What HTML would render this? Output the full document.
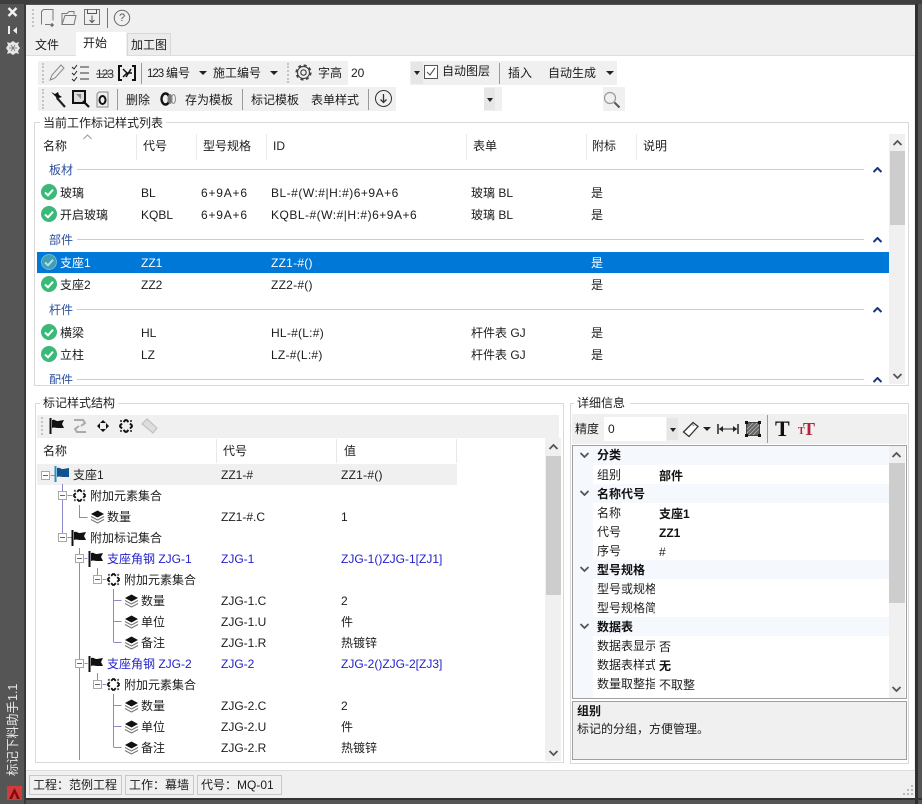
<!DOCTYPE html>
<html lang="zh"><head><meta charset="utf-8"><title>标记下料助手</title>
<style>
html,body{margin:0;padding:0;width:922px;height:804px;overflow:hidden;background:#555}
body{position:relative;font:12px/16px "Liberation Sans","Noto Sans CJK SC",sans-serif;color:#1c1c1c}
div,span,svg{position:absolute}
.t{white-space:nowrap;height:16px}
.b{font-weight:bold;color:#111}
.bl{color:#2222cc}
.g{color:#2b4f9e}
.w{color:#fff}
.ln{height:1px;background:#c4cfdc}
.box{border:1px solid #d9d9d9;box-sizing:border-box}
.gray{background:#f0f0f0}
.sep{width:1px;background:#9a9a9a}
.grip{width:2px;border-left:2px dotted #c4c4c4}
.st{border:1px solid #c8c8c8;background:#f0f0f0;box-sizing:border-box;height:20px;top:775px;line-height:18px;padding-left:3px;white-space:nowrap}
.cat{background:#f5f8fd;left:574px;width:315px;height:19px}
.dd{width:0;height:0;border-left:4px solid transparent;border-right:4px solid transparent;border-top:4px solid #222}
.hs{width:1px;height:26px;top:134px;background:#eaeaea}
.a{letter-spacing:.5px}
.c{letter-spacing:.8px}
.e{letter-spacing:.25px}
</style></head><body>
<svg width="0" height="0" style="left:0;top:0"><defs>
<symbol id="ok" viewBox="0 0 16 16"><circle cx="8" cy="8" r="8" fill="#3cb878"/><path d="M4 8.500l3 2.800 5-5.600" fill="none" stroke="#fff" stroke-width="2"/></symbol>
<symbol id="okd" viewBox="0 0 16 16"><circle cx="8" cy="8" r="7.500" fill="#3f9fb6" stroke="#74b8c8"/><path d="M4 8.500l3 2.800 5-5.600" fill="none" stroke="#b8dbe4" stroke-width="2"/></symbol>
<symbol id="flag" viewBox="0 0 16 16"><path d="M1.500 0v16" stroke="#111" stroke-width="2"/><path d="M3 2c3-1 3 1 6 1l6-1-2 4 2 4-6 0c-3 0-3-1-6 0z" fill="#111"/></symbol>
<symbol id="flagb" viewBox="0 0 16 16"><path d="M1.500 0v16" stroke="#2d8fc0" stroke-width="2"/><path d="M3 2c3-1 3 1 6 1l6-1v9l-6 0c-3 0-3-1-6 0z" fill="#12528f"/></symbol>
<symbol id="ring" viewBox="0 0 14 14"><path d="M7 .5L9.500 3M7 .5L4.500 3M13.500 7L11 4.500M13.500 7L11 9.500M7 13.500L9.500 11M7 13.500L4.500 11M.5 7L3 4.500M.5 7L3 9.500" stroke="#111" stroke-width="2" fill="none"/><path d="M1 1h2v2H1zM11 1h2v2h-2zM1 11h2v2H1zM11 11h2v2h-2z" fill="#555"/></symbol>
<symbol id="lay" viewBox="0 0 15 14"><path d="M7.500 .5L14 4 7.500 7.500 1 4z" fill="#111"/><path d="M1 6.500l6.500 3.500 6.500-3.500M1 9.500l6.500 3.500 6.500-3.500" fill="none" stroke="#777" stroke-width="1.100"/></symbol>
<symbol id="ex" viewBox="0 0 9 9"><rect x=".5" y=".5" width="8" height="8" fill="#fff" stroke="#a8a8a8"/><path d="M2 4.500h5" stroke="#666"/></symbol>
<symbol id="up" viewBox="0 0 9 6"><path d="M.5 5L4.500 1l4 4" fill="none" stroke="#17357f" stroke-width="2"/></symbol>
<symbol id="sup" viewBox="0 0 9 6"><path d="M.5 5L4.500 1l4 4" fill="none" stroke="#555" stroke-width="1.800"/></symbol>
<symbol id="sdn" viewBox="0 0 9 6"><path d="M.5 1L4.500 5l4-4" fill="none" stroke="#555" stroke-width="1.800"/></symbol>
</defs></svg>

<!-- window -->
<div style="left:0;top:0;width:922px;height:4px;background:#3e3e3e"></div>
<div style="left:24px;top:4px;width:2px;height:800px;background:#3a3a3a"></div>
<div style="left:26px;top:5px;width:889px;height:793px;background:#f0f0f0"></div>
<div style="left:915px;top:4px;width:3px;height:800px;background:#2f2f2f"></div>
<div style="left:26px;top:798px;width:896px;height:2px;background:#333"></div>

<!-- side bar -->
<svg style="left:6px;top:4px" width="14" height="52" viewBox="0 0 14 52">
<path d="M2.500 4l8 8M10.500 4l-8 8" stroke="#f2f2f2" stroke-width="2.400"/>
<path d="M3 22v8" stroke="#eee" stroke-width="2"/><path d="M11 23v7l-4-3.500z" fill="#eee"/>
<path d="M1 38l3 1 3-2 3 2 3-1-1 3 2 3-2 3 1 3-3-1-3 2-3-2-3 1 1-3-2-3 2-3z" fill="#e6e6e6"/><path d="M5 41l4 6M9 41l-4 6M3 44h8" stroke="#777" stroke-width=".8"/>
</svg>
<div class="t" style="left:5px;top:776px;width:90px;color:#e8e8e8;font-size:12.500px;transform:rotate(-90deg);transform-origin:0 0">标记下料助手1.1</div>
<svg style="left:7px;top:786px" width="15" height="14" viewBox="0 0 15 14"><rect width="15" height="14" fill="#d33a3a"/><path d="M7.500 2L2 13h3l2.500-6 2.500 6h3z" fill="#7d0c0c"/></svg>

<!-- quick access -->
<div class="grip" style="left:32px;top:9px;height:18px"></div>
<svg style="left:40px;top:8px" width="100" height="20" viewBox="0 0 100 20" fill="none" stroke="#777">
<path d="M1.500 16.500V3.500l2-2h9.500v11M10 16.500H5" /><path d="M12 15v4M10 17h4" stroke="#444"/>
<path d="M22 16.500V5.500h5l2-2h5v3M22 16.500h12l2-9H25z"/>
<rect x="44.500" y="1.500" width="15" height="15"/><path d="M47.500 1.500v4h9v-4M52 7.500v7M49.500 12l2.500 2.500 2.500-2.500" stroke="#555"/>
</svg>
<div class="sep" style="left:107px;top:8px;height:20px;background:#777"></div>
<svg style="left:113px;top:9px" width="18" height="18" viewBox="0 0 18 18"><circle cx="9" cy="9" r="7.700" fill="none" stroke="#666"/></svg>
<div class="t" style="left:119px;top:10px;color:#555;font-size:11px">?</div>

<!-- tabs -->
<div class="t" style="left:35px;top:37px">文件</div>
<div style="left:76px;top:32px;width:50px;height:24px;background:#fff"></div>
<div class="t" style="left:83px;top:35px">开始</div>
<div style="left:127px;top:33px;width:44px;height:22px;background:#ececec;border:1px solid #d8d8d8;border-bottom:0;box-sizing:border-box"></div>
<div class="t" style="left:131px;top:37px">加工图</div>
<div style="left:26px;top:55px;width:50px;height:1px;background:#ddd"></div>
<div style="left:126px;top:55px;width:789px;height:1px;background:#ddd"></div>
<div style="left:26px;top:56px;width:888px;height:714px;background:#fff"></div>
<div style="left:26px;top:770px;width:889px;height:1px;background:#ddd"></div>

<!-- ribbon row1 -->
<div class="gray" style="left:38px;top:61px;width:579px;height:24px"></div>
<div class="grip" style="left:42px;top:63px;height:20px"></div>
<svg style="left:48px;top:63px" width="90" height="20" viewBox="0 0 90 20" fill="none">
<path d="M2 17l2-5L13 2l3 3-9 10z M2 17l3-1" stroke="#888" fill="#eee"/>
<path d="M24 4l2 2 3-4M24 10l2 2 3-4M24 16l2 2 3-4" stroke="#222"/><path d="M32 4h9M32 10h9M32 16h9" stroke="#333"/>
<text x="48" y="15" font-size="12" font-family="Liberation Sans" fill="#333" stroke="none" letter-spacing="-1">123</text><path d="M48 11h17" stroke="#444"/>
<path d="M74 3h-3v14h3M84 3h3v14h-3" stroke="#111" stroke-width="2"/><path d="M75 6l4 4-4 4M83 6l-5 8M78 10h6" stroke="#111" stroke-width="1.500"/>
</svg>
<div class="sep" style="left:141px;top:63px;height:21px"></div>
<div class="t" style="left:147px;top:66px;letter-spacing:-1px;font-size:11.500px">123</div>
<div class="t" style="left:166px;top:65px">编号</div>
<div class="dd" style="left:199px;top:71px"></div>
<div class="t" style="left:213px;top:65px">施工编号</div>
<div class="dd" style="left:270px;top:71px"></div>
<div class="grip" style="left:287px;top:63px;height:20px"></div>
<svg style="left:295px;top:64px" width="17" height="17" viewBox="0 0 17 17" fill="none" stroke="#444"><circle cx="8.500" cy="8.500" r="2.700" stroke-width="1.200"/><circle cx="8.500" cy="8.500" r="6" stroke-width="1.200"/><circle cx="8.500" cy="8.500" r="7.200" stroke-width="1.800" stroke-dasharray="3 2.650"/></svg>
<div class="t" style="left:318px;top:65px">字高</div>
<div style="left:348px;top:61px;width:62px;height:24px;background:#fff"></div>
<div class="t" style="left:351px;top:65px">20</div>
<div style="left:411px;top:62px;width:12px;height:22px;background:#e6e6e6"></div>
<div class="dd" style="left:414px;top:71px;border-left-width:3px;border-right-width:3px"></div>
<svg style="left:424px;top:65px" width="14" height="14" viewBox="0 0 14 14"><rect x=".5" y=".5" width="13" height="13" fill="#fff" stroke="#555"/><path d="M3 7l3 3 5-7" fill="none" stroke="#555" stroke-width="1.100"/></svg>
<div class="t" style="left:442px;top:63px">自动图层</div>
<div class="sep" style="left:499px;top:63px;height:21px"></div>
<div class="t" style="left:508px;top:65px">插入</div>
<div class="t" style="left:548px;top:65px">自动生成</div>
<div class="dd" style="left:606px;top:71px"></div>

<!-- ribbon row2 -->
<div class="gray" style="left:38px;top:87px;width:587px;height:24px"></div>
<div class="grip" style="left:42px;top:89px;height:20px"></div>
<svg style="left:48px;top:89px" width="64" height="20" viewBox="0 0 64 20" fill="none">
<path d="M3 3l4 2 3-2 1 3 3 2-3 1-2 2-1-3z" fill="#111"/><path d="M9 9l8 9" stroke="#222" stroke-width="2.200"/>
<rect x="25" y="2" width="12" height="12" stroke="#111" stroke-width="2" fill="#ddd"/><path d="M28 5h5v5z" fill="#888"/><path d="M35 12l6 6" stroke="#111" stroke-width="2.200"/>
<path d="M51 3h9v15H49V5z" stroke="#888" fill="#eee"/><ellipse cx="54.500" cy="11" rx="3" ry="4" stroke="#111" stroke-width="2"/>
</svg>
<div class="sep" style="left:117px;top:89px;height:21px"></div>
<div class="t" style="left:126px;top:92px">删除</div>
<svg style="left:160px;top:92px" width="17" height="14" viewBox="0 0 17 14"><ellipse cx="5.500" cy="7" rx="4" ry="5.500" fill="none" stroke="#111" stroke-width="2.400"/><ellipse cx="10" cy="7" rx="2.500" ry="5" fill="#777"/><ellipse cx="13.500" cy="7" rx="2" ry="4.500" fill="none" stroke="#888"/></svg>
<div class="t" style="left:185px;top:92px">存为模板</div>
<div class="sep" style="left:242px;top:89px;height:21px"></div>
<div class="t" style="left:251px;top:92px">标记模板</div>
<div class="t" style="left:311px;top:92px">表单样式</div>
<div class="sep" style="left:368px;top:89px;height:21px"></div>
<svg style="left:374px;top:89px" width="19" height="19" viewBox="0 0 19 19" fill="none" stroke="#333"><circle cx="9.500" cy="9.500" r="8"/><path d="M9.500 5v8M6.500 10.500l3 3 3-3" stroke-width="1.300"/></svg>
<div style="left:396px;top:87px;width:88px;height:24px;background:#fff"></div>
<div style="left:484px;top:88px;width:11px;height:22px;background:#e6e6e6"></div>
<div class="dd" style="left:487px;top:98px;border-left-width:3px;border-right-width:3px"></div>
<div style="left:502px;top:87px;width:101px;height:24px;background:#fff"></div>
<svg style="left:603px;top:91px" width="18" height="18" viewBox="0 0 18 18" fill="none"><circle cx="7" cy="7" r="5.500" stroke="#999" stroke-width="1.200"/><path d="M11.500 11.500l5 5" stroke="#555" stroke-width="2"/></svg>

<!-- list group -->
<div class="box" style="left:34px;top:122px;width:875px;height:264px"></div>
<div style="left:40px;top:118px;width:126px;height:10px;background:#fff"></div>
<div class="t" style="left:43px;top:115px">当前工作标记样式列表</div>
<svg style="left:83px;top:134px" width="9" height="6" viewBox="0 0 9 6"><path d="M.5 5L4.500 1l4 4" fill="none" stroke="#999"/></svg>
<div class="hs" style="left:136px"></div><div class="hs" style="left:196px"></div><div class="hs" style="left:266px"></div><div class="hs" style="left:466px"></div><div class="hs" style="left:586px"></div><div class="hs" style="left:636px"></div>
<div class="t" style="left:43px;top:138px">名称</div><div class="t" style="left:143px;top:138px">代号</div><div class="t" style="left:203px;top:138px">型号规格</div><div class="t" style="left:273px;top:138px">ID</div><div class="t" style="left:473px;top:138px">表单</div><div class="t" style="left:592px;top:138px">附标</div><div class="t" style="left:643px;top:138px">说明</div>

<div class="t g" style="left:49px;top:162px">板材</div><div class="ln" style="left:77px;top:169px;width:787px"></div>
<svg style="left:873px;top:167px" width="9" height="6"><use href="#up"/></svg>
<svg style="left:41px;top:184px" width="16" height="16"><use href="#ok"/></svg>
<div class="t" style="left:60px;top:185px">玻璃</div><div class="t" style="left:141px;top:185px">BL</div><div class="t c" style="left:201px;top:185px">6+9A+6</div><div class="t a" style="left:271px;top:185px">BL-#(W:#|H:#)6+9A+6</div><div class="t" style="left:471px;top:185px">玻璃 BL</div><div class="t" style="left:591px;top:185px">是</div>
<svg style="left:41px;top:206px" width="16" height="16"><use href="#ok"/></svg>
<div class="t" style="left:60px;top:207px">开启玻璃</div><div class="t" style="left:141px;top:207px">KQBL</div><div class="t c" style="left:201px;top:207px">6+9A+6</div><div class="t a" style="left:271px;top:207px">KQBL-#(W:#|H:#)6+9A+6</div><div class="t" style="left:471px;top:207px">玻璃 BL</div><div class="t" style="left:591px;top:207px">是</div>

<div class="t g" style="left:49px;top:232px">部件</div><div class="ln" style="left:77px;top:239px;width:787px"></div>
<svg style="left:873px;top:237px" width="9" height="6"><use href="#up"/></svg>
<div style="left:37px;top:252px;width:852px;height:21px;background:#0078d7"></div>
<svg style="left:41px;top:254px" width="16" height="16"><use href="#okd"/></svg>
<div class="t w" style="left:60px;top:255px">支座1</div><div class="t w" style="left:141px;top:255px">ZZ1</div><div class="t w e" style="left:271px;top:255px">ZZ1-#()</div><div class="t w" style="left:591px;top:255px">是</div>
<svg style="left:41px;top:276px" width="16" height="16"><use href="#ok"/></svg>
<div class="t" style="left:60px;top:277px">支座2</div><div class="t" style="left:141px;top:277px">ZZ2</div><div class="t e" style="left:271px;top:277px">ZZ2-#()</div><div class="t" style="left:591px;top:277px">是</div>

<div class="t g" style="left:49px;top:302px">杆件</div><div class="ln" style="left:77px;top:309px;width:787px"></div>
<svg style="left:873px;top:307px" width="9" height="6"><use href="#up"/></svg>
<svg style="left:41px;top:324px" width="16" height="16"><use href="#ok"/></svg>
<div class="t" style="left:60px;top:325px">横梁</div><div class="t" style="left:141px;top:325px">HL</div><div class="t e" style="left:271px;top:325px">HL-#(L:#)</div><div class="t" style="left:471px;top:325px">杆件表 GJ</div><div class="t" style="left:591px;top:325px">是</div>
<svg style="left:41px;top:346px" width="16" height="16"><use href="#ok"/></svg>
<div class="t" style="left:60px;top:347px">立柱</div><div class="t" style="left:141px;top:347px">LZ</div><div class="t e" style="left:271px;top:347px">LZ-#(L:#)</div><div class="t" style="left:471px;top:347px">杆件表 GJ</div><div class="t" style="left:591px;top:347px">是</div>

<div style="left:49px;top:372px;width:30px;height:12px;overflow:hidden"><div class="t g" style="left:0;top:0">配件</div></div>
<div class="ln" style="left:77px;top:379px;width:787px"></div>
<svg style="left:873px;top:377px" width="9" height="6"><use href="#up"/></svg>

<div style="left:889px;top:134px;width:16px;height:250px;background:#f0f0f0"></div>
<div style="left:890px;top:151px;width:15px;height:74px;background:#cdcdcd"></div>
<svg style="left:893px;top:140px" width="9" height="6"><use href="#sup"/></svg>
<svg style="left:893px;top:373px" width="9" height="6"><use href="#sdn"/></svg>

<!-- structure group -->
<div class="box" style="left:35px;top:403px;width:529px;height:360px"></div>
<div style="left:40px;top:398px;width:78px;height:10px;background:#fff"></div>
<div class="t" style="left:43px;top:395px">标记样式结构</div>
<div class="gray" style="left:37px;top:415px;width:522px;height:23px"></div>
<div class="grip" style="left:41px;top:417px;height:18px"></div>
<svg style="left:49px;top:418px" width="16" height="16"><use href="#flag"/></svg>
<svg style="left:72px;top:418px" width="16" height="16" viewBox="0 0 16 16" fill="none" stroke="#aaa" stroke-width="2"><path d="M2 2h9l2 3-4 3M14 14H5L3 11l4-3"/></svg>
<svg style="left:96px;top:419px" width="14" height="14" viewBox="0 0 14 14"><path d="M7 1l3 3H4zM7 13l3-3H4zM1 7l3-3v6zM13 7l-3-3v6z" fill="#111"/></svg>
<svg style="left:119px;top:419px" width="14" height="14"><use href="#ring"/></svg>
<svg style="left:141px;top:418px" width="17" height="16" viewBox="0 0 17 16"><path d="M1 6l5-5 10 9-4 5z" fill="#ddd" stroke="#bbb"/></svg>
<div class="t" style="left:43px;top:443px">名称</div><div class="t" style="left:223px;top:443px">代号</div><div class="t" style="left:344px;top:443px">值</div>
<div style="left:216px;top:439px;width:1px;height:24px;background:#e8e8e8"></div>
<div style="left:336px;top:439px;width:1px;height:24px;background:#e8e8e8"></div>
<div style="left:456px;top:439px;width:1px;height:24px;background:#e8e8e8"></div>
<div class="gray" style="left:37px;top:464px;width:420px;height:21px"></div>

<svg style="left:37px;top:464px" width="110" height="300" viewBox="37 464 110 300" fill="none" stroke="#8a8ac8">
<path d="M50.500 475.500h5M62.500 484v53M67.500 495.500h5M79.500 505v12.500h8M67.500 537.500h5M79.500 548v212M84.500 558.500h3M97.500 568v11M102.500 579.500h4"/>
<path d="M113.500 589v53M113.500 600.500h8M113.500 621.500h8M113.500 642.500h8M84.500 663.500h3M97.500 673v11M102.500 684.500h4M113.500 694v53M113.500 705.500h8M113.500 726.500h8M113.500 747.500h8"/>
</svg>
<svg style="left:41px;top:471px" width="9" height="9"><use href="#ex"/></svg>
<svg style="left:58px;top:491px" width="9" height="9"><use href="#ex"/></svg>
<svg style="left:58px;top:533px" width="9" height="9"><use href="#ex"/></svg>
<svg style="left:75px;top:554px" width="9" height="9"><use href="#ex"/></svg>
<svg style="left:93px;top:575px" width="9" height="9"><use href="#ex"/></svg>
<svg style="left:75px;top:659px" width="9" height="9"><use href="#ex"/></svg>
<svg style="left:93px;top:680px" width="9" height="9"><use href="#ex"/></svg>

<svg style="left:54px;top:466px" width="16" height="16"><use href="#flagb"/></svg>
<div class="t" style="left:73px;top:467px">支座1</div><div class="t" style="left:221px;top:467px">ZZ1-#</div><div class="t e" style="left:341px;top:467px">ZZ1-#()</div>
<svg style="left:73px;top:489px" width="13" height="13"><use href="#ring"/></svg>
<div class="t" style="left:90px;top:488px">附加元素集合</div>
<svg style="left:90px;top:510px" width="15" height="14"><use href="#lay"/></svg>
<div class="t" style="left:107px;top:509px">数量</div><div class="t" style="left:221px;top:509px">ZZ1-#.C</div><div class="t" style="left:341px;top:509px">1</div>
<svg style="left:71px;top:530px" width="16" height="16"><use href="#flag"/></svg>
<div class="t" style="left:90px;top:530px">附加标记集合</div>
<svg style="left:88px;top:551px" width="16" height="16"><use href="#flag"/></svg>
<div class="t bl" style="left:107px;top:551px">支座角钢 ZJG-1</div><div class="t bl" style="left:221px;top:551px">ZJG-1</div><div class="t bl" style="left:341px;top:551px">ZJG-1()ZJG-1[ZJ1]</div>
<svg style="left:107px;top:573px" width="13" height="13"><use href="#ring"/></svg>
<div class="t" style="left:124px;top:572px">附加元素集合</div>
<svg style="left:124px;top:594px" width="15" height="14"><use href="#lay"/></svg>
<div class="t" style="left:141px;top:593px">数量</div><div class="t" style="left:221px;top:593px">ZJG-1.C</div><div class="t" style="left:341px;top:593px">2</div>
<svg style="left:124px;top:615px" width="15" height="14"><use href="#lay"/></svg>
<div class="t" style="left:141px;top:614px">单位</div><div class="t" style="left:221px;top:614px">ZJG-1.U</div><div class="t" style="left:341px;top:614px">件</div>
<svg style="left:124px;top:636px" width="15" height="14"><use href="#lay"/></svg>
<div class="t" style="left:141px;top:635px">备注</div><div class="t" style="left:221px;top:635px">ZJG-1.R</div><div class="t" style="left:341px;top:635px">热镀锌</div>
<svg style="left:88px;top:656px" width="16" height="16"><use href="#flag"/></svg>
<div class="t bl" style="left:107px;top:656px">支座角钢 ZJG-2</div><div class="t bl" style="left:221px;top:656px">ZJG-2</div><div class="t bl" style="left:341px;top:656px">ZJG-2()ZJG-2[ZJ3]</div>
<svg style="left:107px;top:678px" width="13" height="13"><use href="#ring"/></svg>
<div class="t" style="left:124px;top:677px">附加元素集合</div>
<svg style="left:124px;top:699px" width="15" height="14"><use href="#lay"/></svg>
<div class="t" style="left:141px;top:698px">数量</div><div class="t" style="left:221px;top:698px">ZJG-2.C</div><div class="t" style="left:341px;top:698px">2</div>
<svg style="left:124px;top:720px" width="15" height="14"><use href="#lay"/></svg>
<div class="t" style="left:141px;top:719px">单位</div><div class="t" style="left:221px;top:719px">ZJG-2.U</div><div class="t" style="left:341px;top:719px">件</div>
<svg style="left:124px;top:741px" width="15" height="14"><use href="#lay"/></svg>
<div class="t" style="left:141px;top:740px">备注</div><div class="t" style="left:221px;top:740px">ZJG-2.R</div><div class="t" style="left:341px;top:740px">热镀锌</div>

<div style="left:545px;top:438px;width:16px;height:323px;background:#f0f0f0"></div>
<div style="left:546px;top:456px;width:15px;height:139px;background:#cdcdcd"></div>
<svg style="left:549px;top:444px" width="9" height="6"><use href="#sup"/></svg>
<svg style="left:549px;top:750px" width="9" height="6"><use href="#sdn"/></svg>

<!-- details group -->
<div class="box" style="left:570px;top:403px;width:339px;height:361px"></div>
<div style="left:574px;top:398px;width:56px;height:10px;background:#fff"></div>
<div class="t" style="left:577px;top:395px">详细信息</div>
<div class="gray" style="left:572px;top:414px;width:335px;height:30px"></div>
<div class="t" style="left:575px;top:421px">精度</div>
<div style="left:604px;top:417px;width:62px;height:24px;background:#fff"></div>
<div class="t" style="left:608px;top:421px">0</div>
<div style="left:667px;top:418px;width:11px;height:22px;background:#e6e6e6"></div>
<div class="dd" style="left:670px;top:428px;border-left-width:3px;border-right-width:3px"></div>
<svg style="left:682px;top:420px" width="18" height="18" viewBox="0 0 18 18"><path d="M1.500 12L11 2.500l5 4-9 10z" fill="#fff" stroke="#333" stroke-width="1.300"/><path d="M10 4l2 2" stroke="#888"/></svg>
<div class="dd" style="left:703px;top:427px"></div>
<svg style="left:717px;top:423px" width="22" height="12" viewBox="0 0 22 12"><path d="M1 1v10M21 1v10" stroke="#222" stroke-width="1.500"/><path d="M2 6h18" stroke="#222"/><path d="M2 6l4-3v6zM20 6l-4-3v6z" fill="#222"/></svg>
<svg style="left:745px;top:421px" width="16" height="16" viewBox="0 0 16 16"><rect x="1.500" y="1.500" width="13" height="13" fill="#666" stroke="#444"/><path d="M2 8l6-6M2 12l10-10M4 14L14 4M8 14l6-6" stroke="#bbb" stroke-width=".7"/><path d="M0 0h3v3H0zM13 0h3v3h-3zM0 13h3v3H0zM13 13h3v3h-3z" fill="#111"/></svg>
<div class="sep" style="left:767px;top:415px;height:28px"></div>
<div class="t" style="left:775px;top:419px;font:bold 22px/20px 'Liberation Serif',serif;color:#111;height:20px">T</div>
<div class="t" style="left:803px;top:421px;font:bold 18px/16px 'Liberation Serif',serif;color:#b3243c">T</div>
<div class="t" style="left:798px;top:425px;font:bold 10px/14px 'Liberation Serif',serif;color:#b3243c;height:14px">T</div>

<div style="left:572px;top:445px;width:335px;height:254px;box-sizing:border-box;border:1px solid #a0a0a0;background:#fff"></div>
<div style="left:573px;top:446px;width:20px;height:252px;background:#f5f8fd"></div>
<div class="cat" style="top:446px"></div><div class="cat" style="top:484px"></div><div class="cat" style="top:560px"></div><div class="cat" style="top:617px"></div>
<svg style="left:580px;top:452px" width="9" height="6"><use href="#sdn"/></svg>
<svg style="left:580px;top:490px" width="9" height="6"><use href="#sdn"/></svg>
<svg style="left:580px;top:566px" width="9" height="6"><use href="#sdn"/></svg>
<svg style="left:580px;top:623px" width="9" height="6"><use href="#sdn"/></svg>
<div class="t b" style="left:597px;top:447px">分类</div>
<div class="t" style="left:597px;top:467px">组别</div><div class="t b" style="left:659px;top:468px">部件</div>
<div class="t b" style="left:597px;top:486px">名称代号</div>
<div class="t" style="left:597px;top:505px">名称</div><div class="t b" style="left:659px;top:506px">支座1</div>
<div class="t" style="left:597px;top:524px">代号</div><div class="t b" style="left:659px;top:525px">ZZ1</div>
<div class="t" style="left:597px;top:543px">序号</div><div class="t" style="left:659px;top:544px">#</div>
<div class="t b" style="left:597px;top:562px">型号规格</div>
<div style="left:597px;top:581px;width:58px;height:16px;overflow:hidden"><div class="t" style="left:0;top:0">型号或规格</div></div>
<div style="left:597px;top:600px;width:58px;height:16px;overflow:hidden"><div class="t" style="left:0;top:0">型号规格简称</div></div>
<div class="t b" style="left:597px;top:619px">数据表</div>
<div style="left:597px;top:638px;width:58px;height:16px;overflow:hidden"><div class="t" style="left:0;top:0">数据表显示</div></div><div class="t b" style="left:659px;top:639px;font-weight:normal">否</div>
<div style="left:597px;top:657px;width:58px;height:16px;overflow:hidden"><div class="t" style="left:0;top:0">数据表样式</div></div><div class="t b" style="left:659px;top:658px">无</div>
<div style="left:597px;top:676px;width:58px;height:16px;overflow:hidden"><div class="t" style="left:0;top:0">数量取整指定</div></div><div class="t" style="left:659px;top:677px">不取整</div>

<div style="left:889px;top:446px;width:16px;height:252px;background:#f0f0f0"></div>
<div style="left:889px;top:463px;width:16px;height:140px;background:#cdcdcd"></div>
<svg style="left:892px;top:452px" width="9" height="6"><use href="#sup"/></svg>
<svg style="left:892px;top:686px" width="9" height="6"><use href="#sdn"/></svg>

<div style="left:572px;top:701px;width:335px;height:59px;box-sizing:border-box;border:1px solid #a0a0a0;background:#f0f0f0"></div>
<div class="t b" style="left:577px;top:703px">组别</div>
<div class="t" style="left:577px;top:721px">标记的分组，方便管理。</div>

<!-- status -->
<div class="st" style="left:29px;width:93px">工程：范例工程</div>
<div class="st" style="left:125px;width:69px">工作：幕墙</div>
<div class="st" style="left:197px;width:85px">代号：MQ-01</div>
<svg style="left:902px;top:784px" width="12" height="12" viewBox="0 0 12 12"><path d="M9 1h2v2H9zM5 5h2v2H5zM9 5h2v2H9zM1 9h2v2H1zM5 9h2v2H5zM9 9h2v2H9z" fill="#bbb"/></svg>
</body></html>
